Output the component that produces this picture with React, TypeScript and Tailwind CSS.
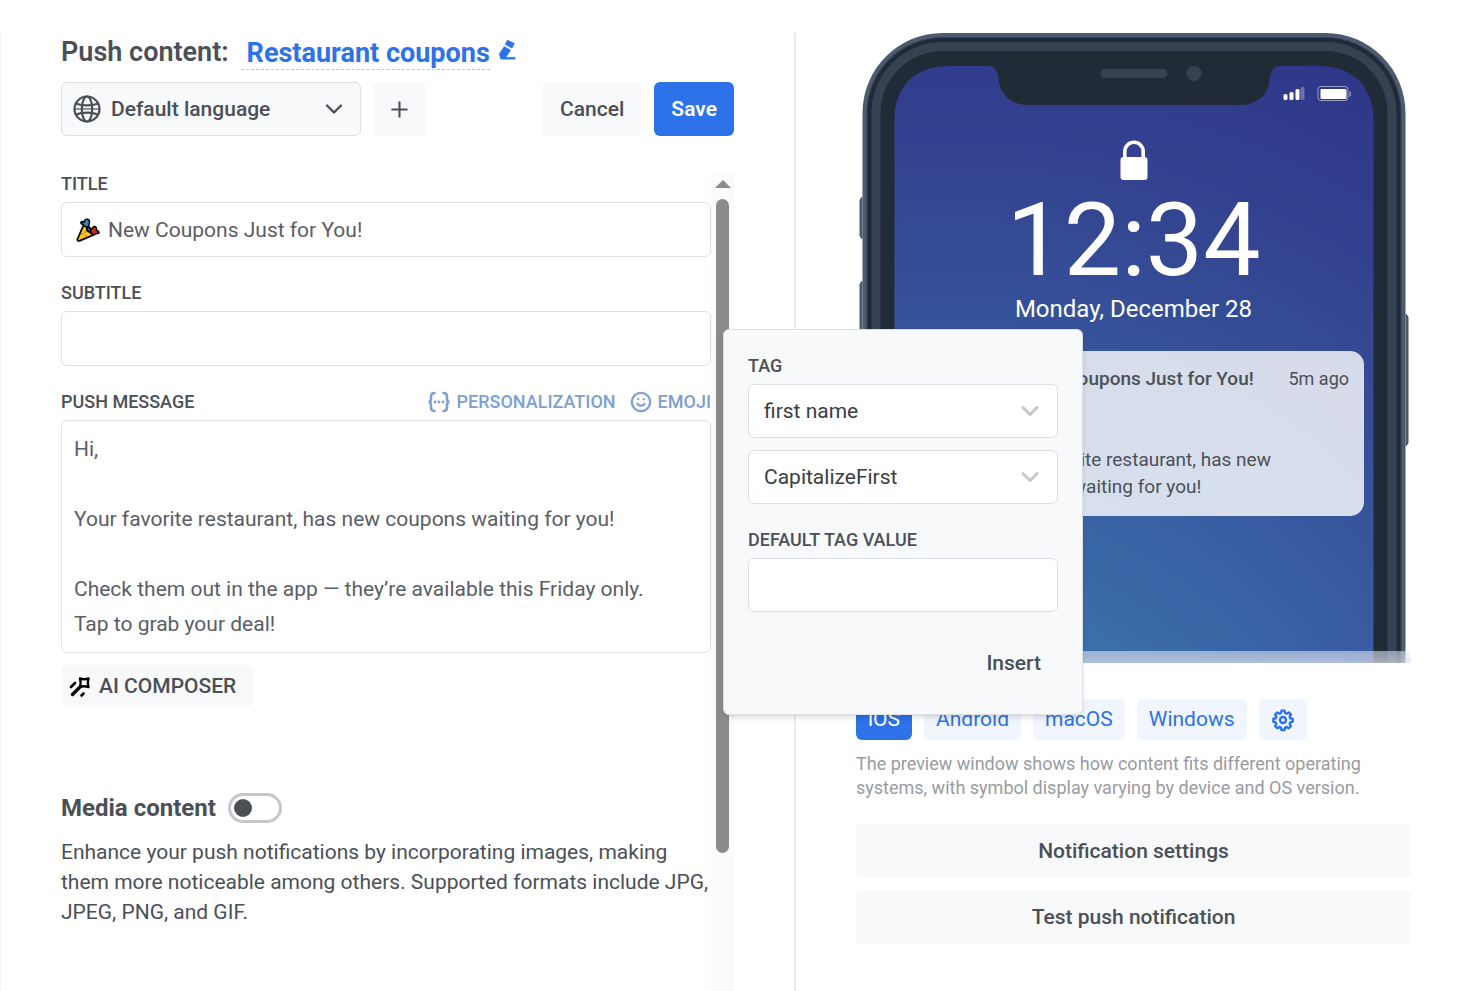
import { useState } from "react";
import type { ReactNode } from "react";
import { Plus, Smile } from "lucide-react";

const MESSAGE = `Hi,

Your favorite restaurant, has new coupons waiting for you!

Check them out in the app — they’re available this Friday only.
Tap to grab your deal!`;

const platforms = ["iOS", "Android", "macOS", "Windows"];

function Chevron({ className, width }: { className: string; width: number }) {
  return (
    <svg viewBox="0 0 20 12" className={className} fill="none" stroke="currentColor" strokeWidth={width} strokeLinecap="round" strokeLinejoin="round" aria-hidden="true">
      <path d="M3 2.5 10 9.5 17 2.5" />
    </svg>
  );
}

function Globe() {
  return (
    <svg viewBox="0 0 28 28" className="size-7 shrink-0" fill="none" stroke="#4b5057" strokeWidth="2.2" aria-hidden="true">
      <circle cx="14" cy="14" r="12.5" />
      <ellipse cx="14" cy="14" rx="5.2" ry="12.5" />
      <path d="M3 8.500c6 2.600 16 2.600 22 0M3 19.500c6-2.600 16-2.600 22 0" />
      <path d="M1.500 14h25" strokeWidth="1.200" />
    </svg>
  );
}

function PartyPopper() {
  return (
    <svg viewBox="0 0 24 24" className="size-6 shrink-0" stroke="#000" strokeWidth="1.8" strokeLinejoin="round" aria-hidden="true">
      <path d="M8.500 5 18.500 16.500 3.500 22.800c-1.500.5-2.500-.5-2-1.800z" fill="#fcc21b" />
      <path d="M11 12c-1-3 2-4 3-2s3 1 4 3-1 4-3 2-3-1-4-3z" fill="#5c4a8c" />
      <path d="M7 6.500C4.500 6 4 4 6 3.500c1 0 1.500.5 2 1C8 2 10 .8 11.500 1.200c2 .8 2.500 2.300 1.800 4L12.500 9 9 8.500z" fill="#2a88b8" strokeWidth="1.4" />
      <path d="M14.500 13.500c0-2 1-3 2.200-3.500.3-2 2.800-2 3.500-.5.5 1 .3 2 .3 3 2 .3 2.800 1.500 2.500 2.500l-4 1.200c-2 .5-4-.7-4.500-2.700z" fill="#c92a1a" strokeWidth="1.4" />
      <path d="M6 15v2M10 17v1.500" stroke="#e05a4a" strokeWidth="1.2" />
      <path d="M9 13v2" stroke="#2aa6c4" strokeWidth="1.2" />
    </svg>
  );
}

function Wand() {
  return (
    <svg viewBox="0 0 22 22" className="size-[22px]" fill="none" stroke="#000" strokeLinecap="round" strokeLinejoin="round" aria-hidden="true">
      <path d="M11 2.500c3 .9 6 .9 8.500 0-.9 3-.9 6 0 8.500-3-.9-6-.9-8.500 0 .9-3 .9-6 0-8.500z" strokeWidth="2.400" />
      <path d="M10.500 11.500 3.500 18.500" strokeWidth="3.200" />
      <path d="M2 11 6 7M12.500 19.500l2-2" strokeWidth="2.600" />
    </svg>
  );
}

function Braces() {
  return (
    <svg viewBox="0 0 24 22" className="h-[22px] w-6" fill="none" stroke="currentColor" strokeWidth="2.500" strokeLinecap="round" aria-hidden="true">
      <path d="M7.500 2C5 2 4 3 4 5.500v2.500c0 2-1 3-2.500 3 1.500 0 2.500 1 2.500 3v2.500c0 2.500 1 3.500 3.500 3.500M16.500 2c2.500 0 3.500 1 3.500 3.500v2.500c0 2 1 3 2.500 3-1.500 0-2.500 1-2.500 3v2.500c0 2.500-1 3.500-3.500 3.500" />
      <path d="M8 11h.01M12 11h.01M16 11h.01" strokeWidth="2.800" />
    </svg>
  );
}

function Pencil() {
  return (
    <svg viewBox="0 0 18 22" className="h-[22px] w-[18px]" fill="#2d72e8" stroke="#2d72e8" strokeWidth=".4" strokeLinejoin="round" aria-hidden="true">
      <path d="M9.300 1 16.500 4.400 14 9.200 7.200 5.600z" />
      <path d="M6.200 7.500 12.600 11.200 8 18.300H17.200V20.200H2.700L1.200 14.800z" />
    </svg>
  );
}

function Gear() {
  return (
    <svg viewBox="0 0 24 24" className="size-6" fill="none" stroke="currentColor" aria-hidden="true">
      <path
        d="M10.300 2.500h3.400l.6 2.600 1.700.7 2.300-1.400 2.400 2.400-1.400 2.300.7 1.700 2.600.6v3.400l-2.600.6-.7 1.700 1.400 2.300-2.400 2.400-2.300-1.400-1.700.7-.6 2.600h-3.400l-.6-2.600-1.700-.7-2.300 1.400-2.400-2.400 1.400-2.300-.7-1.700-2.600-.6v-3.400l2.600-.6.7-1.700-1.400-2.300 2.400-2.400 2.300 1.400 1.700-.7z"
        transform="translate(1.100 .4) scale(.91)"
        strokeWidth="2.600"
        strokeLinejoin="round"
      />
      <circle cx="12" cy="12" r="3" strokeWidth="2.400" />
    </svg>
  );
}

function PhoneFrame() {
  return (
    <svg viewBox="0 0 555 630" className="absolute left-1/2 top-0 h-[630px] w-[555px] -translate-x-1/2" aria-hidden="true">
      <defs>
        <radialGradient id="wallpaper" gradientUnits="userSpaceOnUse" cx="94" cy="867" r="935">
          <stop offset="0" stopColor="#3f8cbc" />
          <stop offset=".3" stopColor="#3b70ab" />
          <stop offset=".52" stopColor="#385ba1" />
          <stop offset=".62" stopColor="#36539a" />
          <stop offset=".75" stopColor="#344692" />
          <stop offset="1" stopColor="#2f3588" />
        </radialGradient>
      </defs>
      <g fill="#4d5b70">
        <path d="M6 164H5l-2 3v36l2 3h1zM6 248H5l-2 3v80h3zM549 281h1l2 3v126l-2 3h-1z" />
        <rect x="6" width="543" height="720" rx="80" />
      </g>
      <rect x="10" y="4" width="535" height="720" rx="76" fill="#364252" />
      <rect x="11" y="5" width="533" height="720" rx="75" fill="#212b38" />
      <rect x="15" y="9" width="525" height="720" rx="71" fill="#364252" />
      <rect x="24" y="18" width="507" height="720" rx="62" fill="#212b38" />
      <path
        d="M38 630V88C38 50 62 33 93 33H131c8 0 11 6 11 14 2 14 12 25 29 25H384c17 0 28-11 29-25 1-8 4-14 11-14H462c31 0 55 17 55 55V630z"
        fill="url(#wallpaper)"
      />
      <rect x="244" y="36" width="67" height="9" rx="4.500" fill="#364252" />
      <circle cx="337.500" cy="40.500" r="7.500" fill="#364252" />
      <g fill="#fff">
        <rect x="427" y="61" width="4" height="6" rx="1.500" />
        <rect x="433" y="59" width="4" height="8" rx="1.500" />
        <rect x="439" y="56" width="4" height="11" rx="1.500" />
        <rect x="444" y="54" width="4" height="13" rx="1.500" opacity=".3" />
        <rect x="461.500" y="53.500" width="30" height="14" rx="3" fill="none" stroke="#fff" opacity=".5" />
        <rect x="464" y="56" width="26" height="10" rx="1" />
        <path d="M493 58c2 1 2 5 0 6z" opacity=".5" />
      </g>
    </svg>
  );
}

function FieldLabel({ htmlFor, children }: { htmlFor: string; children: ReactNode }) {
  return (
    <label htmlFor={htmlFor} className="block text-lg font-medium leading-6">
      {children}
    </label>
  );
}

function PopoverSelect({ label, id, option }: { label: string; id: string; option: string }) {
  return (
    <div className="flex h-[54px] items-center rounded-md border border-[#dcdfe6] bg-white pl-[15px] pr-[17px]">
      <select id={id} aria-label={label} className="h-full min-w-0 flex-1 appearance-none bg-transparent pt-px text-[21px] text-[#3b3d40] outline-none">
        <option>{option}</option>
      </select>
      <Chevron className="h-3 w-5 text-[#c8c8c8]" width={3} />
    </div>
  );
}

function TagPopover() {
  return (
    <div className="absolute left-full top-[157px] z-10 -ml-[11px] w-[360px] rounded-md border border-[#dcdfe4] bg-[#f8f9fb] p-6 shadow-md">
      <FieldLabel htmlFor="tag">TAG</FieldLabel>
      <div className="mt-[6px] space-y-3">
        <PopoverSelect id="tag" label="Tag" option="first name" />
        <PopoverSelect id="format" label="Format" option="CapitalizeFirst" />
      </div>
      <div className="mt-6">
        <FieldLabel htmlFor="default-tag">DEFAULT TAG VALUE</FieldLabel>
        <input id="default-tag" type="text" className="mt-[6px] block h-[54px] w-full rounded-md border border-[#dcdfe6] bg-white px-4 text-[21px] outline-none" />
      </div>
      <div className="mt-6 flex justify-end">
        <button type="button" className="h-[54px] px-[17px] pt-px text-[21px] font-medium">Insert</button>
      </div>
    </div>
  );
}

function Editor() {
  const [title, setTitle] = useState("New Coupons Just for You!");
  const [message, setMessage] = useState(MESSAGE);
  return (
    <div className="relative mt-9 flex flex-1">
      <div className="min-w-0 flex-1">
        <FieldLabel htmlFor="title">TITLE</FieldLabel>
        <div className="mt-[6px] flex h-[55px] items-center gap-2 rounded-md border border-[#dcdfe6] px-[14px]">
          <PartyPopper />
          <input id="title" value={title} onChange={(e) => setTitle(e.target.value)} className="h-full min-w-0 flex-1 pt-px text-[21px] text-[#5a5e66] outline-none" />
        </div>

        <div className="mt-6">
          <FieldLabel htmlFor="subtitle">SUBTITLE</FieldLabel>
          <input id="subtitle" className="mt-[6px] block h-[55px] w-full rounded-md border border-[#dcdfe6] px-3 text-[21px] outline-none" />
        </div>

        <div className="mt-6 flex items-center justify-between">
          <FieldLabel htmlFor="message">PUSH MESSAGE</FieldLabel>
          <div className="flex gap-[14px] text-lg font-medium leading-6 text-[#7d9fd3]">
            <button type="button" className="flex items-center gap-[6px]">
              <Braces />
              PERSONALIZATION
            </button>
            <button type="button" className="flex items-center gap-[6px]">
              <Smile className="size-[22px]" strokeWidth={2.5} />
              EMOJI
            </button>
          </div>
        </div>
        <textarea
          id="message"
          value={message}
          onChange={(e) => setMessage(e.target.value)}
          className="mt-[6px] block h-[233px] w-full resize-none rounded-md border border-[#dcdfe6] px-3 py-[11px] text-[21px] leading-[35px] text-[#5a5e66] outline-none"
        />
        <button type="button" className="mt-3 flex h-[42px] items-center gap-2 rounded-md bg-[#f8f9fb] pl-2 pr-[17px] pt-px text-[21px] font-medium">
          <Wand />
          AI COMPOSER
        </button>

        <div className="mt-[86px] flex items-center gap-3">
          <h2 id="media" className="text-2xl font-bold leading-[30px]">Media content</h2>
          <input
            type="checkbox"
            role="switch"
            aria-labelledby="media"
            className="h-[30px] w-[54px] appearance-none rounded-full border-3 border-[#c4c6cb] p-[3px] before:block before:size-[18px] before:rounded-full before:bg-[#4b5057]"
          />
        </div>
        <p className="mt-[14px] text-[21px] leading-[30px]">
          Enhance your push notifications by incorporating images, making them more noticeable among others. Supported formats include JPG, JPEG, PNG, and GIF.
        </p>
      </div>

      <div className="flex w-[23px] flex-col items-center bg-[#fbfbfb] pt-2" aria-hidden="true">
        <svg viewBox="0 0 16 8" className="h-2 w-4" fill="#8b8b8b">
          <path d="M0 8 8 0 16 8z" />
        </svg>
        <div className="mt-[11px] h-[654px] w-[13px] rounded-full bg-[#8b8b8b]" />
      </div>

      <TagPopover />
    </div>
  );
}

function PhonePreview() {
  return (
    <div className="relative h-[630px] overflow-hidden">
      <PhoneFrame />
      <div className="relative mx-auto flex w-[461px] flex-col items-center pt-[107px]">
        <svg viewBox="0 0 28 41" className="h-[41px] w-7" aria-hidden="true">
          <path d="M4.800 18V11.500a9.200 9.200 0 0 1 18.400 0V18" fill="none" stroke="#fff" strokeWidth="3.600" />
          <rect x=".5" y="17" width="27" height="23" rx="3" fill="#fff" />
        </svg>
        <p className="mt-[10px] text-[102px] leading-[98px] text-white">12:34</p>
        <p className="mt-1 text-2xl leading-8 text-white">Monday, December 28</p>
        <div className="mt-[26px] flex w-full gap-3 rounded-[14px] bg-white/80 px-[15px] pb-4 pt-[14px] text-[19px] leading-[27px]">
          <span className="size-16 shrink-0 rounded-lg bg-[#2d72e8]" />
          <div className="flex-1 whitespace-nowrap">
            <p className="flex justify-between">
              <span className="font-medium">🎉 New Coupons Just for You!</span>
              <span className="text-lg leading-[27px]">5m ago</span>
            </p>
            <p>Hi,</p>
            <p>&nbsp;</p>
            <p>Your favorite restaurant, has new</p>
            <p>coupons waiting for you!</p>
          </div>
        </div>
      </div>
      <div className="absolute inset-x-0 bottom-0 h-3 rounded-t-lg bg-gradient-to-b from-[#e1eaf5]/55 to-[#e1e4f0]/70" />
    </div>
  );
}

function PreviewPanel() {
  const [active, setActive] = useState("iOS");
  return (
    <section className="px-[60px] pb-12">
      <PhonePreview />
      <div className="mt-9 flex gap-3 text-[21px]">
        {platforms.map((name) => (
          <button
            key={name}
            type="button"
            onClick={() => setActive(name)}
            className={
              name === active
                ? "h-[41px] rounded-md bg-[#2d72e8] px-3 text-white"
                : "h-[41px] rounded-md bg-[#f1f5fe] px-3 text-[#2d72e8]"
            }
          >
            {name}
          </button>
        ))}
        <button type="button" aria-label="Preview settings" className="h-[41px] rounded-md bg-[#f1f5fe] px-3 text-[#2d72e8]">
          <Gear />
        </button>
      </div>
      <p className="mt-3 text-lg leading-6 text-[#999b9f]">
        The preview window shows how content fits different operating systems, with symbol display varying by device and OS version.
      </p>
      <div className="mt-6 space-y-3">
        <button type="button" className="block h-[54px] w-full rounded-md bg-[#f8f9fb] pt-px text-[21px] font-medium">Notification settings</button>
        <button type="button" className="block h-[54px] w-full rounded-md bg-[#f8f9fb] pt-px text-[21px] font-medium">Test push notification</button>
      </div>
    </section>
  );
}

export default function App() {
  return (
    <main className="grid min-h-screen grid-cols-[796fr_675fr] bg-white pt-[33px] font-['Roboto',sans-serif] text-[#4b5057]">
      <section className="flex flex-col border-l border-r-2 border-l-[#f3f4f6] border-r-[#e9ecf2] px-[60px]">
        <div className="flex h-[37px] items-start">
          <h1 className="text-[27px] font-semibold leading-[38px]">Push content:</h1>
          <a href="#name" className="ml-3 border-b border-dashed border-[#c4c6cb] pl-[6px] pt-[5px] text-[27px] font-bold leading-[31px] text-[#2d72e8]">
            Restaurant coupons
          </a>
          <button type="button" aria-label="Rename" className="ml-2 mt-[6px]">
            <Pencil />
          </button>
        </div>
        <div className="mt-3 flex gap-3">
          <div className="flex h-[54px] w-[300px] items-center gap-[10px] rounded-md border border-[#dbe0e6] bg-[#f8f9fb] pl-[11px] pr-4">
            <Globe />
            <select aria-label="Language" className="h-full min-w-0 flex-1 appearance-none bg-transparent pt-px text-[21px] font-medium outline-none">
              <option>Default language</option>
            </select>
            <Chevron className="h-3 w-5" width={2.4} />
          </div>
          <button type="button" aria-label="Add language" className="flex h-[54px] w-[53px] items-center justify-center rounded-md bg-[#f8f9fb]">
            <Plus className="size-[25px]" />
          </button>
          <button type="button" className="ml-auto h-[54px] rounded-md bg-[#f8f9fb] px-[18px] pt-px text-[21px] font-medium">Cancel</button>
          <button type="button" className="h-[54px] rounded-md bg-[#2d72e8] px-[17px] pt-px text-[21px] font-semibold text-white">Save</button>
        </div>
        <Editor />
      </section>
      <PreviewPanel />
    </main>
  );
}
